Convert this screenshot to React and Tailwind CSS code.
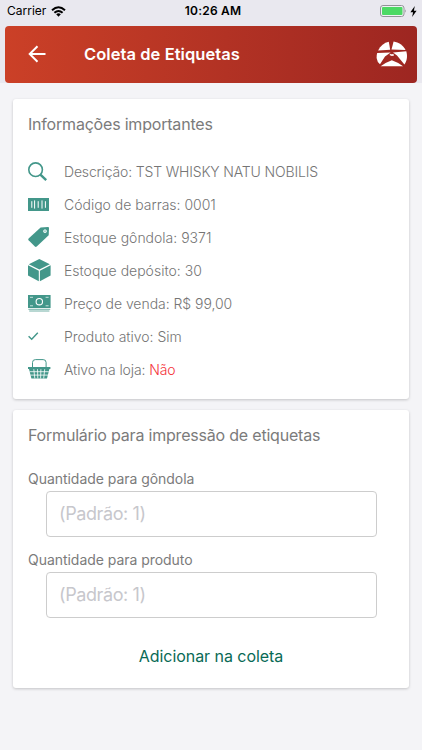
import React from 'react';

const SearchIcon = () => (
    <svg className="h-[33px] w-6 shrink-0" viewBox="0 0 24 33" fill="none" stroke="#43978a">
        <circle cx="7.6" cy="13.7" r="6.8" strokeWidth="1.6" />
        <path d="M12.4 18.6 18.2 24.2" strokeWidth="2.4" />
    </svg>
);

const BarcodeIcon = () => (
    <svg className="h-[33px] w-6 shrink-0" viewBox="0 0 24 33" fill="none" stroke="#fff">
        <path d="M0 9h21v13H0z" fill="#43978a" stroke="none" />
        <path d="M3.8 12.2v6.6M6.6 11.4v8.2M10.2 12.2v6.6M14 11.4v8.2M17.4 12.2v6.6" strokeWidth="1" />
    </svg>
);

const TagIcon = () => (
    <svg className="h-[33px] w-6 shrink-0" viewBox="0 0 24 33" fill="#43978a">
        <path d="M12.6 5.4 20 5q1 0 1 1l-.3 7.2-12 11.4q-.9.8-1.8 0L.6 18.2q-.8-.9 0-1.8z" />
        <circle cx="17" cy="9.2" r="1.5" fill="#a9d3cb" stroke="#fff" strokeWidth=".7" />
    </svg>
);

const BoxIcon = () => (
    <svg className="h-[33px] w-6 shrink-0" viewBox="0 0 24 33" fill="#43978a">
        <path d="M11.3 4 21.8 9.2 11.3 14.5.8 9.2z" />
        <path d="M0 10.3 10.8 15.7V26.2L0 20.6z" />
        <path d="M22.6 10.3 11.9 15.7V26.2l10.7-5.6z" />
    </svg>
);

const CashIcon = () => (
    <svg className="h-[33px] w-6 shrink-0" viewBox="0 0 24 33" fill="none">
        <path d="M0 7h22.6v13H0z" fill="#43978a" />
        <circle cx="11.3" cy="13.7" r="3.2" stroke="#fff" strokeWidth="1.1" />
        <path d="M2 9.3h3M17.6 9.3h3M2 17.8h3M17.6 17.8h3" stroke="#d5ebe6" strokeWidth=".9" />
        <path d="M.4 21.3h21.8M1.2 23h20.2" stroke="#43978a" strokeOpacity=".75" strokeWidth="1" />
    </svg>
);

const CheckIcon = () => (
    <svg className="h-[33px] w-6 shrink-0" viewBox="0 0 24 33" fill="none" stroke="#43978a" strokeWidth="1.4">
        <path d="M.6 15.3 3.7 18.3 9.8 11.7" />
    </svg>
);

const BasketIcon = () => (
    <svg className="h-[33px] w-6 shrink-0" viewBox="0 0 24 33" fill="none">
        <path d="M4.5 14V8.5Q4.5 5.6 7.4 5.6h7.8q2.9 0 2.9 2.9V14" stroke="#43978a" strokeWidth="1" />
        <path d="M0 13h22.4v1.9h-1L19 24.6H3.4L1 14.9H0z" fill="#43978a" />
        <path d="M1.6 17.7h19.2M2.3 21.1h17.8M5.8 15.2l1 9.2M9.5 15.2l.3 9.2M12.9 15.2l-.3 9.2M16.7 15.2l-1 9.2" stroke="#fff" strokeWidth=".8" />
    </svg>
);

const Logo = () => (
    <svg className="-mt-px h-[26px] w-8" viewBox="0 0 32 26" fill="#fff">
        <path d="M2.1 9.6C4.4 4.6 8.2 1.6 12.8.7L14.2 8.8z" />
        <path d="M17.6.6c5.2.7 9.6 3.9 11.9 8.4L15.5 8.4z" />
        <path d="M.6 17Q.4 14.4 1.2 12L14.6 11.6 9 15.6 4 23.2Q1.1 21 .6 17z" />
        <path d="M17 11.4 30.3 10.2C31.8 15.4 30.9 20.2 28.4 23.6L21 14.6z" />
        <path d="M4.6 25.2Q10.6 21 15.8 19.2 21.4 21 27 25.2z" />
        <path d="M13.4 14l1.4-1.2 1.1.8 1.3-.8.9 1.6-2.2.6z" />
    </svg>
);

const items = [
    { icon: SearchIcon, label: 'Descrição: TST WHISKY NATU NOBILIS', spacing: 'tracking-[-0.16px]' },
    { icon: BarcodeIcon, label: 'Código de barras: 0001', spacing: 'tracking-[-0.01px]' },
    { icon: TagIcon, label: 'Estoque gôndola: 9371', spacing: 'tracking-[0px]' },
    { icon: BoxIcon, label: 'Estoque depósito: 30', spacing: 'tracking-[0px]' },
    { icon: CashIcon, label: 'Preço de venda: R$ 99,00', spacing: 'tracking-[-0.04px]' },
    { icon: CheckIcon, label: 'Produto ativo: Sim', spacing: 'tracking-[-0.02px]' },
    { icon: BasketIcon, label: 'Ativo na loja: ', value: 'Não', spacing: 'tracking-[-0.1px]' },
];

const StatusBar = () => (
    <div className="grid h-[26px] grid-cols-3 items-center px-[7px] pb-1 text-black">
        <div className="flex items-center gap-1.5">
            <span className="text-[12px]">Carrier</span>
            <svg className="-ml-px h-[11px] w-[15px]" viewBox="0 0 15 11" fill="none" stroke="#000" strokeWidth="2">
                <path d="M1 4.2Q7.5-1.6 14 4.2M3.4 6.8Q7.5 3.2 11.6 6.8" />
                <path d="M5.2 8.3Q7.5 6.4 9.8 8.3L7.5 10.7z" fill="#000" stroke="none" />
            </svg>
        </div>
        <span className="pl-1 text-center text-[12px] font-semibold tracking-[0.2px] whitespace-nowrap">10:26 AM</span>
        <div className="-mr-[2px] flex items-center justify-end gap-[3px]">
            <svg className="h-3 w-[27px]" viewBox="0 0 27 12">
                <rect x=".5" y=".5" width="23.5" height="11" rx="2.5" fill="#f1f1f4" stroke="#929297" />
                <rect x="2" y="2" width="20.5" height="8" rx="1" fill="#4cd964" />
                <path d="M25.2 4.2q1.6 1.8 0 3.6z" fill="#929297" />
            </svg>
            <svg className="h-[11px] w-[7px]" viewBox="0 0 7 11">
                <path d="M4.8 0 .4 6.2h2.7L2.1 11l4.5-6.3H3.9z" />
            </svg>
        </div>
    </div>
);

const Field = ({ label }) => (
    <label className="block">
        <span className="block h-5 text-[14px] leading-5 tracking-[-0.04px] text-[#7b7b7b]">{label}</span>
        <input
            className="mt-[2px] ml-[18px] block h-[46px] w-[331px] rounded-[4px] border border-[#cdcdcd] bg-white px-3 pb-[2px] text-[18px] tracking-[-0.4px] placeholder:text-[#c7c7cc]"
            placeholder="(Padrão: 1)"
        />
    </label>
);

const App = () => {
    return (
        <div className="h-[750px] w-[422px] overflow-hidden bg-[#f4f4f7] font-['Inter',sans-serif]">
            <header className="h-[83px] bg-[#e9e8ef]">
                <StatusBar />
                <div className="mx-[5px] flex h-[57px] items-center rounded-[4px] bg-linear-to-r from-[#cb4027] to-[#9d2621] pr-[9px] pl-[23px]">
                    <svg className="mb-px h-[18px] w-[18px]" viewBox="0 0 18 18" fill="none" stroke="#fff" strokeWidth="2">
                        <path d="M17.5 9H2M9.5 1.2 1.7 9l7.8 7.8" />
                    </svg>
                    <h1 className="ml-[38px] flex-1 text-[16.5px] font-semibold tracking-[0.06px] text-white">Coleta de Etiquetas</h1>
                    <Logo />
                </div>
            </header>

            <main className="space-y-[11px] px-[13px] pt-4">
                <section className="h-[300px] rounded-[3px] bg-white px-[15px] pt-3 shadow-[0_1px_3px_rgba(0,0,0,0.2)]">
                    <h2 className="h-[45px] text-[16px] leading-[26px] tracking-[-0.2px] text-[#7b7b7b]">Informações importantes</h2>
                    <ul>
                        {items.map(({ icon: Icon, label, value, spacing }) => (
                            <li key={label} className="flex h-[33px] items-center gap-3">
                                <Icon />
                                <span className={`pb-[2px] text-[14px] font-light whitespace-pre text-[#757575] ${spacing}`}>
                                    {label}
                                    {value && <span className="text-[#f4333a]">{value}</span>}
                                </span>
                            </li>
                        ))}
                    </ul>
                </section>

                <section className="h-[278px] rounded-[3px] bg-white px-[15px] pt-3 shadow-[0_1px_3px_rgba(0,0,0,0.2)]">
                    <h2 className="h-[47px] text-[16px] leading-[26px] tracking-[-0.2px] text-[#7b7b7b]">Formulário para impressão de etiquetas</h2>
                    <div className="space-y-[13px]">
                        <Field label="Quantidade para gôndola" />
                        <Field label="Quantidade para produto" />
                    </div>
                    <button className="mx-auto mt-[26px] block text-[16px] leading-6 tracking-[-0.05px] text-[#096a56]">Adicionar na coleta</button>
                </section>
            </main>
        </div>
    );
};

export default App;
